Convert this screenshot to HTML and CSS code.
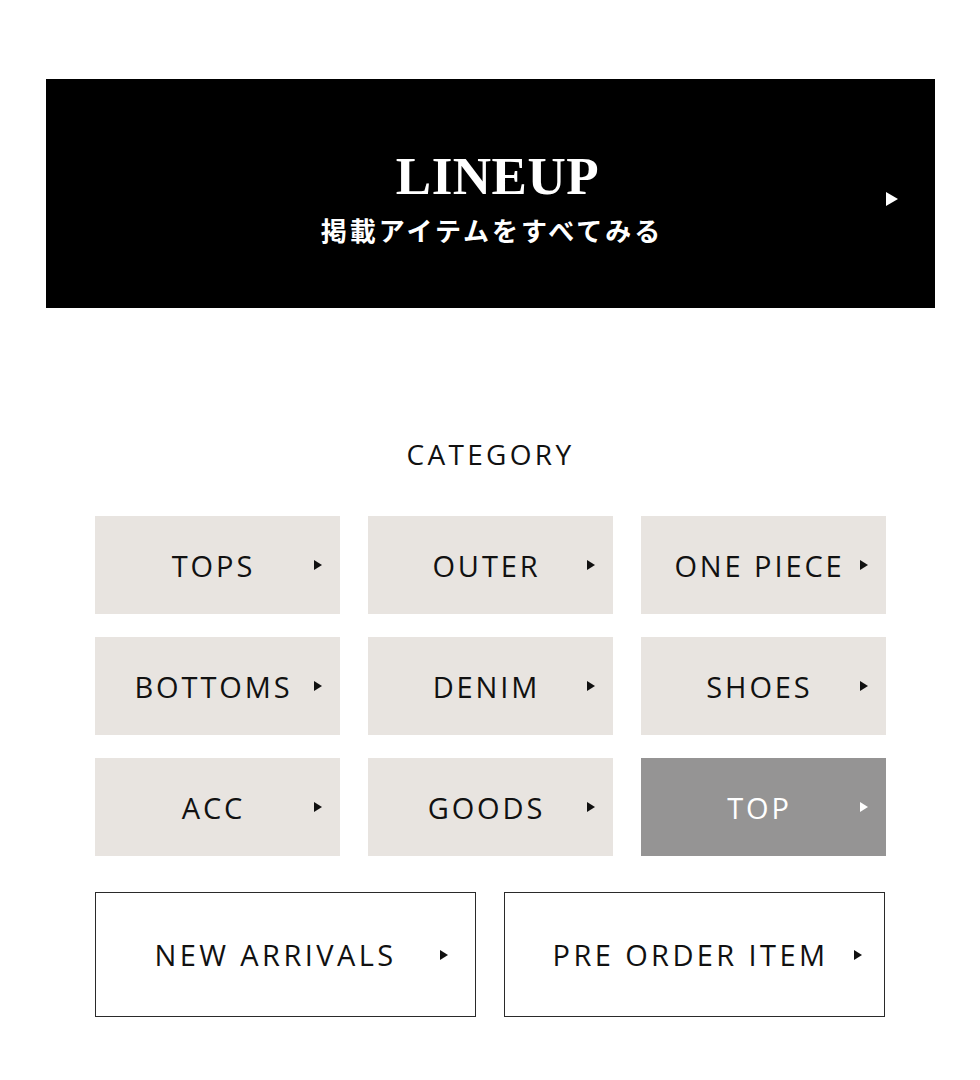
FILE: index.html
```html
<!DOCTYPE html>
<html lang="ja">
<head>
<meta charset="utf-8">
<title>LINEUP</title>
<link rel="stylesheet" href="styles.css">
</head>
<body>
<div class="page">
  <a class="banner" href="#">
    <span class="banner-title">LINEUP</span>
    <span class="banner-sub">掲載アイテムをすべてみる</span>
    <span class="arrow arrow-lg"></span>
  </a>

  <section class="category">
    <h2 class="cat-title">CATEGORY</h2>
    <div class="grid">
      <a class="cell" href="#"><span class="label">TOPS</span><span class="arrow"></span></a>
      <a class="cell" href="#"><span class="label">OUTER</span><span class="arrow"></span></a>
      <a class="cell" href="#"><span class="label">ONE PIECE</span><span class="arrow"></span></a>
      <a class="cell" href="#"><span class="label">BOTTOMS</span><span class="arrow"></span></a>
      <a class="cell" href="#"><span class="label">DENIM</span><span class="arrow"></span></a>
      <a class="cell" href="#"><span class="label">SHOES</span><span class="arrow"></span></a>
      <a class="cell" href="#"><span class="label">ACC</span><span class="arrow"></span></a>
      <a class="cell" href="#"><span class="label">GOODS</span><span class="arrow"></span></a>
      <a class="cell cell-dark" href="#"><span class="label">TOP</span><span class="arrow"></span></a>
    </div>
    <div class="links">
      <a class="outline outline-new" href="#"><span class="label">NEW ARRIVALS</span><span class="arrow"></span></a>
      <a class="outline outline-pre" href="#"><span class="label">PRE ORDER ITEM</span><span class="arrow"></span></a>
    </div>
  </section>
</div>
</body>
</html>
```
FILE: styles.css
```css
* { box-sizing: border-box; }
html, body { margin: 0; padding: 0; background: #fff; }
body { font-family: "Open Sans", "Noto Sans", sans-serif; color: #111; }
a { text-decoration: none; color: inherit; }

.page {
  width: 980px;
  padding: 79px 45px 0 46px;
}

.banner {
  position: relative;
  display: flex;
  flex-direction: column;
  align-items: center;
  height: 229px;
  background: #000;
  color: #fff;
  padding-top: 71px;
}
.banner-title {
  margin-left: 14px;
  font-family: "Liberation Serif", "Times New Roman", serif;
  font-weight: 700;
  font-size: 53px;
  line-height: 1;
  letter-spacing: 0.5px;
}
.banner-sub {
  margin-top: 14px;
  font-family: "Noto Sans CJK JP", sans-serif;
  font-weight: 600;
  font-size: 26px;
  line-height: 1;
  letter-spacing: 3px;
  margin-right: -3px;
}

.arrow {
  position: absolute;
  right: 18px;
  top: 50%;
  width: 0;
  height: 0;
  margin-top: -5px;
  border-top: 5.5px solid transparent;
  border-bottom: 5.5px solid transparent;
  border-left: 8px solid currentColor;
}
.arrow-lg {
  right: 37px;
  margin-top: -2px;
  border-top-width: 7.5px;
  border-bottom-width: 7.5px;
  border-left-width: 12px;
}

.category {
  padding: 0 49px 0 49px;
}
.cat-title {
  margin: 122px 0 0;
  text-align: center;
  font-weight: 400;
  font-size: 28px;
  line-height: 48px;
  letter-spacing: 3.3px;
}

.grid {
  margin-top: 38px;
  display: grid;
  grid-template-columns: repeat(3, 245px);
  column-gap: 28px;
  row-gap: 23px;
}
.cell {
  position: relative;
  height: 98px;
  background: #e8e4e0;
  display: flex;
  align-items: center;
  justify-content: center;
  padding-right: 8px;
}
.cell-dark {
  background: #959494;
  color: #fff;
}
.label {
  font-size: 29px;
  line-height: 1;
  letter-spacing: 2.9px;
}

.links {
  margin-top: 36px;
  display: grid;
  grid-template-columns: 381px 381px;
  column-gap: 28px;
}
.outline {
  position: relative;
  height: 125px;
  border: 1px solid #2a2a2a;
  display: flex;
  align-items: center;
  justify-content: center;
}
.outline .label { letter-spacing: 3.4px; }
.outline-new { padding-right: 20px; }
.outline-new .arrow { right: 27px; }
.outline-pre { padding-right: 8px; }
.outline-pre .arrow { right: 22px; }
```
